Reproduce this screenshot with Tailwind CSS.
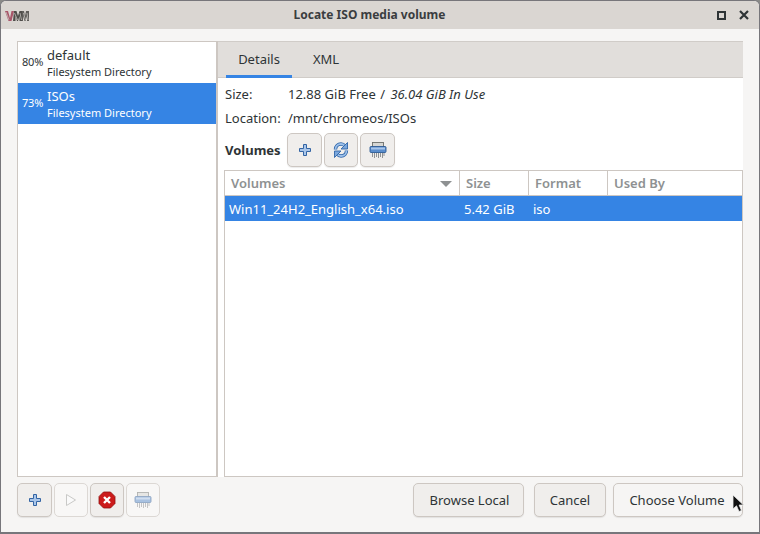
<!doctype html>
<html>
<head>
<meta charset="utf-8">
<script src="https://cdn.jsdelivr.net/npm/@tailwindcss/browser@4"></script>
<title>Locate ISO media volume</title>
</head>
<body class="bg-[#8a8a88]">
<div class="w-[760px] h-[534px] flex flex-col overflow-hidden bg-[#f6f5f4] border border-[#77767b] border-b-2 rounded-t-[6px] font-['Noto_Sans',sans-serif] text-[13px] text-[#2e3436]">
  <!-- titlebar -->
  <div class="h-[28px] shrink-0 flex items-center bg-[#dad6d2] pl-[4px] pr-[9px]">
    <svg width="24" height="11" viewBox="0 0 24 11" class="mt-[2px]">
      <path d="M0 0h3l2 7 1.500-7H9L6.500 10H3.500z" fill="#a8566a"/>
      <path d="M9 0h2.500l1.500 5 1.500-5H17v10h-2.500V5L13 10h-1L10.500 5v5H8z" fill="#4f4d4a"/>
      <path d="M17 0h2l1 5 1-5h3v10h-2V5l-1.500 5h-1L18 5v5h-1z" fill="#5f5d5a"/>
      <path d="M1 1l3 8M9.500 2l3 7M15 2l1.500 7M18.500 2l2 7M22 2l1 7" stroke="#c5c2be" stroke-width=".8"/>
    </svg>
    <div class="flex-1 text-center font-bold text-[12px] text-[#3a3d3f] pr-[7px]">Locate ISO media volume</div>
    <div class="w-[9px] h-[9px] border-2 border-[#2e3436] mr-[13px]"></div>
    <svg width="10" height="10" viewBox="0 0 10 10" class="mr-[1px]"><path d="M1 1l8 8M9 1l-8 8" stroke="#2e3436" stroke-width="2.2"/></svg>
  </div>

  <div class="flex-1 flex flex-col pt-[12px] px-[16px] pb-[16px]">
    <div class="h-[436px] flex">
      <!-- pool list -->
      <div class="w-[201px] shrink-0 bg-white border border-r-2 border-[#cdc7c2]">
        <div class="h-[41px] flex items-center pl-[4px]">
          <span class="w-[25px] text-[11px] tracking-[-0.2px]">80%</span>
          <div class="leading-none pt-[2px]">
            <div class="text-[13px] leading-[16px]">default</div>
            <div class="text-[11px] leading-[16px] mt-[1px]">Filesystem Directory</div>
          </div>
        </div>
        <div class="h-[41px] flex items-center pl-[4px] bg-[#3584e4] text-white">
          <span class="w-[25px] text-[11px] tracking-[-0.2px]">73%</span>
          <div class="leading-none pt-[2px]">
            <div class="text-[13px] leading-[16px]">ISOs</div>
            <div class="text-[11px] leading-[16px] mt-[1px]">Filesystem Directory</div>
          </div>
        </div>
      </div>

      <!-- details -->
      <div class="flex-1 flex flex-col bg-white">
        <div class="h-[37px] shrink-0 bg-[#e1dedb] flex pl-[8px] border-t border-b border-[#d0ccc8]">
          <div class="w-[66px] h-[36px] flex items-center justify-center border-b-[3px] border-[#3584e4] pt-[3px]">Details</div>
          <div class="w-[68px] h-[35px] flex items-center justify-center pt-[1px]">XML</div>
        </div>
        <div class="flex-1 flex flex-col pl-[6px]">
          <div class="flex h-[32px] items-center pt-[1px]">
            <span class="w-[64px] pl-[1px]">Size:</span>
            <span>12.88 GiB Free <span class="ml-[1px] mr-[2px]">/</span> <i>36.04 GiB In Use</i></span>
          </div>
          <div class="flex h-[16px] items-center pt-[2px]">
            <span class="w-[64px] pl-[1px] shrink-0">Location:</span>
            <span>/mnt/chromeos/ISOs</span>
          </div>
          <div class="flex items-center h-[34px] mt-[7px] gap-[2px]">
            <span class="font-bold w-[61px] pl-[1px] pt-[2px]">Volumes</span>
            <button class="w-[35px] h-[34px] flex items-center justify-center rounded-[5px] border border-[#cdc7c2] bg-[#f0eeec] shadow-[0_1px_1px_rgba(0,0,0,0.08)]">
              <svg width="14" height="14" viewBox="0 0 14 14"><path d="M5.500 1.500h3v4h4v3h-4v4h-3v-4h-4v-3h4z" fill="#a9c6ea" stroke="#3465a4"/></svg>
            </button>
            <button class="w-[34px] h-[34px] flex items-center justify-center rounded-[5px] border border-[#cdc7c2] bg-[#f0eeec] shadow-[0_1px_1px_rgba(0,0,0,0.08)]">
              <svg width="16" height="18" viewBox="0 0 16 18">
                <path d="M2.500 8.500C2.500 5 5 3 8 3c1.800 0 3 .8 4 2" fill="none" stroke="#2f65a8" stroke-width="3.400"/>
                <path d="M2.500 8.500C2.500 5 5 3 8 3c1.800 0 3 .8 4 2" fill="none" stroke="#9cc0ea" stroke-width="1.800"/>
                <path d="M14.500 1.500v6.500h-6.500z" fill="#7ba7dc" stroke="#2f65a8" stroke-width=".9"/>
                <path d="M13.500 9.500c0 3.500-2.500 5.500-5.500 5.500-1.800 0-3-.8-4-2" fill="none" stroke="#2f65a8" stroke-width="3.400"/>
                <path d="M13.500 9.500c0 3.500-2.500 5.500-5.500 5.500-1.800 0-3-.8-4-2" fill="none" stroke="#9cc0ea" stroke-width="1.800"/>
                <path d="M1.500 16.500v-6.500h6.500z" fill="#7ba7dc" stroke="#2f65a8" stroke-width=".9"/>
              </svg>
            </button>
            <button class="w-[35px] h-[34px] flex items-center justify-center rounded-[5px] border border-[#cdc7c2] bg-[#f0eeec] shadow-[0_1px_1px_rgba(0,0,0,0.08)]">
              <svg width="18" height="18" viewBox="0 0 18 18">
                <rect x="3.500" y="1.500" width="11" height="5" fill="#d6d6d3" stroke="#6d6f6c" stroke-width=".9"/>
                <rect x="1" y="5.500" width="16" height="6" rx="1" fill="#5a8dcc" stroke="#2d5a94" stroke-width=".9"/>
                <rect x="2" y="6.500" width="14" height="2" fill="#a9c6ea"/>
                <path d="M3.500 12v4M5.500 12v5M7.500 12v4M9.500 12v5M11.500 12v4M13.500 12v5M15 12v3" stroke="#85878a" stroke-width=".9"/>
              </svg>
            </button>
          </div>
          <!-- volumes table -->
          <div class="flex-1 mt-[3px] bg-white border border-[#cdc7c2]">
            <div class="h-[25px] flex font-semibold text-[#8e9192] border-b border-[#cdc7c2]">
              <div class="w-[235px] pl-[6px] pt-[1px] flex items-center justify-between pr-[7px] border-r border-[#cdc7c2]">Volumes
                <svg width="12" height="6" viewBox="0 0 12 6"><path d="M0 0h12L6 6z" fill="#8e9192"/></svg>
              </div>
              <div class="w-[69px] pl-[6px] pt-[1px] flex items-center border-r border-[#cdc7c2]">Size</div>
              <div class="w-[79px] pl-[6px] pt-[1px] flex items-center border-r border-[#cdc7c2]">Format</div>
              <div class="flex-1 pl-[6px] pt-[1px] flex items-center">Used By</div>
            </div>
            <div class="h-[25px] flex items-center bg-[#3584e4] text-white pt-[3px]">
              <div class="w-[235px] pl-[4px]">Win11_24H2_English_x64.iso</div>
              <div class="w-[69px] pl-[4px]">5.42 GiB</div>
              <div class="w-[79px] pl-[4px]">iso</div>
            </div>
          </div>
        </div>
      </div>
    </div>

    <!-- footer -->
    <div class="flex items-center mt-[6px] h-[34px]">
      <div class="flex gap-[2px]">
        <button class="w-[35px] h-[34px] flex items-center justify-center rounded-[5px] border border-[#cdc7c2] bg-[#f0eeec] shadow-[0_1px_1px_rgba(0,0,0,0.08)]">
          <svg width="14" height="14" viewBox="0 0 14 14"><path d="M5.500 1.500h3v4h4v3h-4v4h-3v-4h-4v-3h4z" fill="#a9c6ea" stroke="#3465a4"/></svg>
        </button>
        <button class="w-[34px] h-[34px] flex items-center justify-center rounded-[5px] border border-[#dcd8d4] bg-[#f8f7f6]">
          <svg width="12" height="14" viewBox="0 0 12 14"><path d="M1.500 1.500l9 5.500-9 5.500z" fill="#fafafa" stroke="#c9c9c7"/></svg>
        </button>
        <button class="w-[34px] h-[34px] flex items-center justify-center rounded-[5px] border border-[#cdc7c2] bg-[#f0eeec] shadow-[0_1px_1px_rgba(0,0,0,0.08)]">
          <svg width="18" height="18" viewBox="0 0 18 18"><path d="M5.500 1h7L17 5.500v7L12.500 17h-7L1 12.500v-7z" fill="#cc1b1b" stroke="#8f1010" stroke-width=".8"/><path d="M6 6l6 6M12 6l-6 6" stroke="#fff" stroke-width="2.400"/></svg>
        </button>
        <button class="w-[34px] h-[34px] flex items-center justify-center rounded-[5px] border border-[#dcd8d4] bg-[#f8f7f6]">
          <svg width="18" height="18" viewBox="0 0 18 18" class="opacity-50">
            <rect x="3.500" y="1.500" width="11" height="5" fill="#d6d6d3" stroke="#6d6f6c" stroke-width=".9"/>
            <rect x="1" y="5.500" width="16" height="6" rx="1" fill="#5a8dcc" stroke="#2d5a94" stroke-width=".9"/>
            <rect x="2" y="6.500" width="14" height="2" fill="#a9c6ea"/>
            <path d="M3.500 12v4M5.500 12v5M7.500 12v4M9.500 12v5M11.500 12v4M13.500 12v5M15 12v3" stroke="#85878a" stroke-width=".9"/>
          </svg>
        </button>
      </div>
      <div class="ml-auto flex relative">
        <button class="w-[111px] h-[34px] rounded-[5px] border border-[#cdc7c2] bg-[#f0eeec] pl-[2px] pt-[1px] shadow-[0_1px_1px_rgba(0,0,0,0.08)]">Browse Local</button>
        <button class="w-[72px] h-[34px] ml-[10px] rounded-[5px] border border-[#cdc7c2] bg-[#f0eeec] pt-[1px] shadow-[0_1px_1px_rgba(0,0,0,0.08)]">Cancel</button>
        <button class="w-[130px] h-[34px] ml-[7px] rounded-[5px] border border-[#cdc7c2] bg-[#f6f5f4] pt-[1px] pr-[2px] shadow-[0_1px_1px_rgba(0,0,0,0.08)]">Choose Volume</button>
        <svg width="14" height="20" viewBox="0 0 14 20" class="absolute right-[-3px] top-[11px]"><path d="M1 1v14l3.500-3.200L7 17.500l2.500-1-2.400-5.500H11.500z" fill="#111" stroke="#eee" stroke-width=".8"/></svg>
      </div>
    </div>
  </div>
</div>
</body>
</html>
